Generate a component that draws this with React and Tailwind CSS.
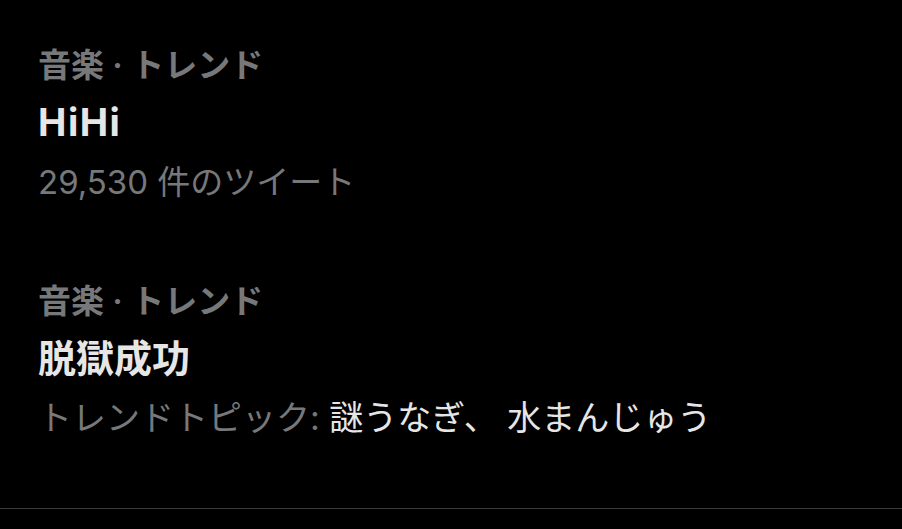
export default function App() {
  const trends = [
    {
      label: "音楽 · トレンド",
      title: "HiHi",
      titleClass: "tracking-[1.5px]",
      subClass: "text-[33px]",
      sub: <span className="text-[#76787a]">29,530 件のツイート</span>,
    },
    {
      label: "音楽 · トレンド",
      title: "脱獄成功",
      titleClass: "tracking-normal",
      subClass: "text-[34px]",
      sub: (
        <>
          <span className="text-[#76787a]">トレンドトピック: </span>
          <span className="text-[#e6e6e6]">謎うなぎ、 水まんじゅう</span>
        </>
      ),
    },
  ];

  return (
    <div
      className="w-[902px] h-[529px] bg-black overflow-hidden"
      style={{ fontFamily: 'Inter, "Noto Sans CJK JP", sans-serif' }}
    >
      <div className="pt-[7px]">
        {trends.map((t, i) => (
          <div key={i} className="px-[38px] py-[30px]">
            <div className="text-[33px] leading-[56px] font-semibold text-[#76787a]">{t.label}</div>
            <div className={`text-[38px] leading-[58px] font-bold text-[#e6e6e6] ${t.titleClass}`}>{t.title}</div>
            <div className={`leading-[62px] font-normal whitespace-nowrap ${t.subClass}`}>{t.sub}</div>
          </div>
        ))}
      </div>
      <div className="mt-[29px] h-px bg-[#3a3a3c]"></div>
    </div>
  );
}
